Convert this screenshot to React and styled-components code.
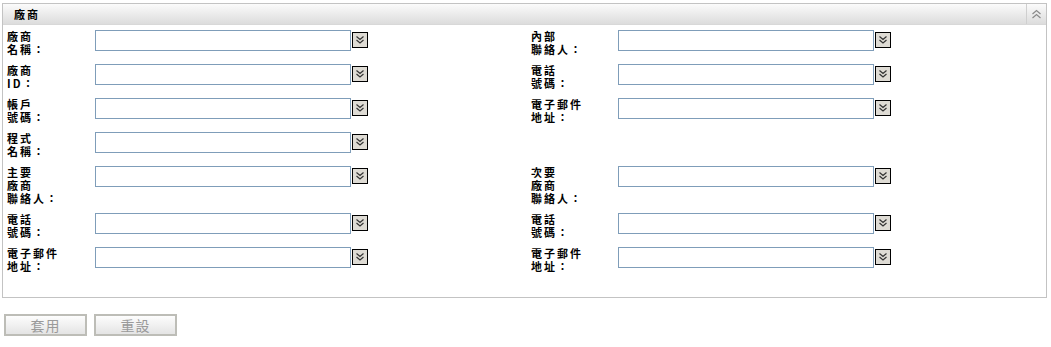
import styled, { createGlobalStyle } from 'styled-components';

const GlobalStyle = createGlobalStyle`
  body {
    margin: 0;
    background: #ffffff;
    font-family: "Noto Sans CJK TC", "Liberation Sans", sans-serif;
  }
`;

const Page = styled.div`
  padding: 3px 4px 0 2px;
`;

const Panel = styled.div`
  border: 1px solid #c3c3c3;
  height: 295px;
  box-sizing: border-box;
`;

const PanelHeader = styled.div`
  display: flex;
  align-items: center;
  height: 20px;
  background: linear-gradient(#fbfbfb, #dcdcdc);
  border-bottom: 1px solid #d8d8d8;
`;

const PanelTitle = styled.div`
  flex: 1;
  padding-left: 11px;
  font-size: 11px;
  line-height: 13px;
  font-weight: bold;
  letter-spacing: 2px;
  color: #000;
`;

const CollapseButton = styled.div`
  width: 19px;
  height: 20px;
  border-left: 1px solid #cfcfcf;
  display: flex;
  align-items: center;
  justify-content: center;
`;

const Form = styled.div`
  display: grid;
  grid-template-columns: 524px 1fr;
  row-gap: 8px;
  padding: 5px 0 0 4px;
`;

const Field = styled.div`
  display: flex;
  align-items: flex-start;
`;

const Label = styled.div`
  width: ${(p) => p.$width}px;
  flex-shrink: 0;
  font-size: 11px;
  line-height: 13px;
  font-weight: bold;
  letter-spacing: 2px;
  color: #000;
`;

const Input = styled.input`
  width: 256px;
  height: 21px;
  box-sizing: border-box;
  border: 1px solid #7f9db9;
  margin: 0;
  padding: 0 3px;
  font-size: 12px;
  outline: none;
`;

const PickButton = styled.div`
  width: 14px;
  height: 14px;
  margin: 2px 0 0 1px;
  border: 1px solid #000;
  background: #dedbd4;
  display: flex;
  align-items: center;
  justify-content: center;
`;

const Actions = styled.div`
  display: flex;
  gap: 7px;
  padding: 16px 0 0 2px;
`;

const ActionButton = styled.div`
  width: 79px;
  height: 18px;
  border: 2px solid #bdbdb7;
  background: linear-gradient(#fdfdfd, #e4e4e4);
  color: #9a9a9a;
  font-size: 14px;
  line-height: 18px;
  text-align: center;
  letter-spacing: 1px;
`;

const ChevronDown = () => (
  <svg width="10" height="10" viewBox="0 0 10 10">
    <path d="M1.5 1.5 L5 4.5 L8.5 1.5 M1.5 5 L5 8 L8.5 5" fill="none" stroke="#333" strokeWidth="1.2" />
  </svg>
);

const ChevronUp = () => (
  <svg width="11" height="10" viewBox="0 0 11 10">
    <path d="M1.5 5 L5.5 1.5 L9.5 5 M1.5 9 L5.5 5.5 L9.5 9" fill="none" stroke="#8a8a8a" strokeWidth="1.2" />
  </svg>
);

const rows = [
  [['廠商', '名稱：'], ['內部', '聯絡人：']],
  [['廠商', 'ID：'], ['電話', '號碼：']],
  [['帳戶', '號碼：'], ['電子郵件', '地址：']],
  [['程式', '名稱：'], null],
  [['主要', '廠商', '聯絡人：'], ['次要', '廠商', '聯絡人：']],
  [['電話', '號碼：'], ['電話', '號碼：']],
  [['電子郵件', '地址：'], ['電子郵件', '地址：']],
];

function FormField({ lines, labelWidth }) {
  return (
    <Field>
      <Label $width={labelWidth}>
        {lines.map((line, i) => (
          <div key={i}>{line}</div>
        ))}
      </Label>
      <Input type="text" />
      <PickButton>
        <ChevronDown />
      </PickButton>
    </Field>
  );
}

export default function App() {
  return (
    <Page>
      <GlobalStyle />
      <Panel>
        <PanelHeader>
          <PanelTitle>廠商</PanelTitle>
          <CollapseButton>
            <ChevronUp />
          </CollapseButton>
        </PanelHeader>
        <Form>
          {rows.map(([left, right], i) => [
            <FormField key={`l${i}`} lines={left} labelWidth={88} />,
            right ? <FormField key={`r${i}`} lines={right} labelWidth={87} /> : <div key={`r${i}`} />,
          ])}
        </Form>
      </Panel>
      <Actions>
        <ActionButton>套用</ActionButton>
        <ActionButton>重設</ActionButton>
      </Actions>
    </Page>
  );
}
